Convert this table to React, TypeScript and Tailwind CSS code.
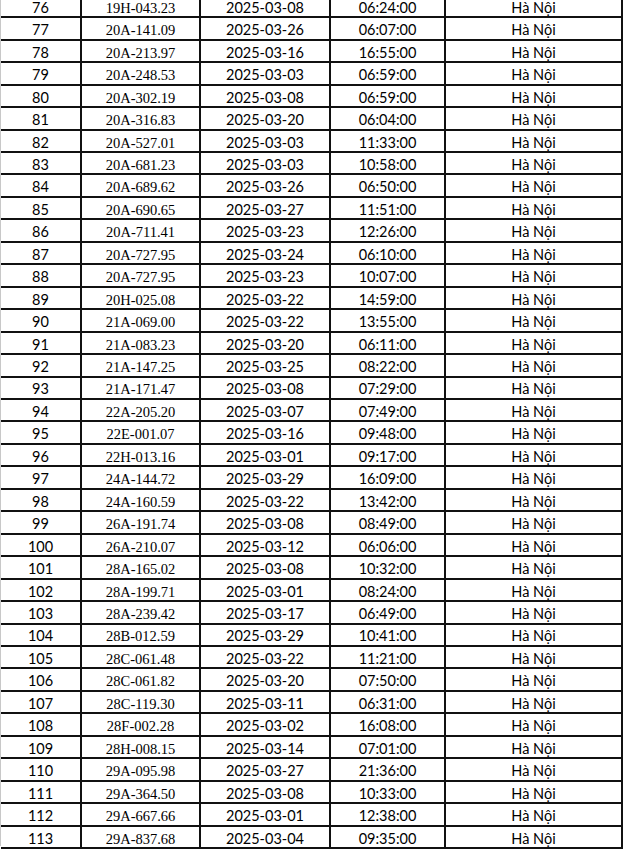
const rows: [number, string, string, string][] = [
  [76, "19H-043.23", "2025-03-08", "06:24:00"],
  [77, "20A-141.09", "2025-03-26", "06:07:00"],
  [78, "20A-213.97", "2025-03-16", "16:55:00"],
  [79, "20A-248.53", "2025-03-03", "06:59:00"],
  [80, "20A-302.19", "2025-03-08", "06:59:00"],
  [81, "20A-316.83", "2025-03-20", "06:04:00"],
  [82, "20A-527.01", "2025-03-03", "11:33:00"],
  [83, "20A-681.23", "2025-03-03", "10:58:00"],
  [84, "20A-689.62", "2025-03-26", "06:50:00"],
  [85, "20A-690.65", "2025-03-27", "11:51:00"],
  [86, "20A-711.41", "2025-03-23", "12:26:00"],
  [87, "20A-727.95", "2025-03-24", "06:10:00"],
  [88, "20A-727.95", "2025-03-23", "10:07:00"],
  [89, "20H-025.08", "2025-03-22", "14:59:00"],
  [90, "21A-069.00", "2025-03-22", "13:55:00"],
  [91, "21A-083.23", "2025-03-20", "06:11:00"],
  [92, "21A-147.25", "2025-03-25", "08:22:00"],
  [93, "21A-171.47", "2025-03-08", "07:29:00"],
  [94, "22A-205.20", "2025-03-07", "07:49:00"],
  [95, "22E-001.07", "2025-03-16", "09:48:00"],
  [96, "22H-013.16", "2025-03-01", "09:17:00"],
  [97, "24A-144.72", "2025-03-29", "16:09:00"],
  [98, "24A-160.59", "2025-03-22", "13:42:00"],
  [99, "26A-191.74", "2025-03-08", "08:49:00"],
  [100, "26A-210.07", "2025-03-12", "06:06:00"],
  [101, "28A-165.02", "2025-03-08", "10:32:00"],
  [102, "28A-199.71", "2025-03-01", "08:24:00"],
  [103, "28A-239.42", "2025-03-17", "06:49:00"],
  [104, "28B-012.59", "2025-03-29", "10:41:00"],
  [105, "28C-061.48", "2025-03-22", "11:21:00"],
  [106, "28C-061.82", "2025-03-20", "07:50:00"],
  [107, "28C-119.30", "2025-03-11", "06:31:00"],
  [108, "28F-002.28", "2025-03-02", "16:08:00"],
  [109, "28H-008.15", "2025-03-14", "07:01:00"],
  [110, "29A-095.98", "2025-03-27", "21:36:00"],
  [111, "29A-364.50", "2025-03-08", "10:33:00"],
  [112, "29A-667.66", "2025-03-01", "12:38:00"],
  [113, "29A-837.68", "2025-03-04", "09:35:00"],
];

// spreadsheet-like cells: Calibri-ish sans for most columns, Times for plates
const cell = "border-r-2 border-[#111] flex items-center justify-center pt-[4px] leading-none";
const sans = "font-['Lato','Noto_Sans',sans-serif] text-[14.5px]";
const serif = "font-['Liberation_Serif','Times_New_Roman',serif] text-[14.5px]";

export default function App() {
  return (
    <div className="w-[624px] h-[850px] overflow-hidden bg-white text-black">
      <div className="h-full border-l border-[#c8c8c8]">
        <div className="-mt-[4.2px] w-[622px]">
          {rows.map(([stt, plate, date, time]) => (
            <div key={stt} className="flex h-[22.46px] border-b-2 border-[#111]">
              <div className={`w-[81px] ${cell} ${sans}`}>{stt}</div>
              <div className={`w-[119px] ${cell} ${serif}`}>{plate}</div>
              <div className={`w-[130px] ${cell} ${sans}`}>{date}</div>
              <div className={`w-[115px] ${cell} ${sans}`}>{time}</div>
              <div className={`w-[177px] ${cell} ${sans}`}>Hà Nội</div>
            </div>
          ))}
        </div>
      </div>
    </div>
  );
}
